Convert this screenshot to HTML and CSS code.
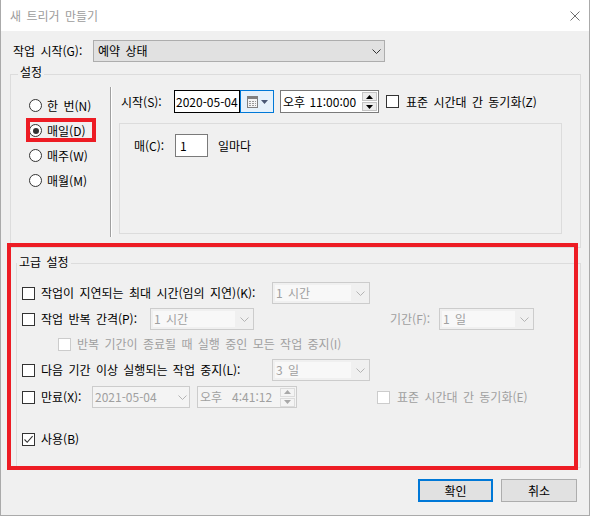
FILE: index.html
```html
<!DOCTYPE html>
<html lang="ko">
<head>
<meta charset="utf-8">
<title>새 트리거 만들기</title>
<link rel="stylesheet" href="styles.css">
</head>
<body>
<div class="window">
  <div class="titlebar">
    <span class="title">새 트리거 만들기</span>
    <svg class="close" width="10" height="10" viewBox="0 0 10 10"><path d="M0.5 0.5 L9.5 9.5 M9.5 0.5 L0.5 9.5" stroke="#707070" stroke-width="1" fill="none"/></svg>
  </div>
  <div class="client">
    <div class="start-row">
      <span class="start-label">작업 시작(G):</span>
      <div class="combo combo-on">
        <span class="val">예약 상태</span>
        <svg class="chev" width="9" height="5" viewBox="0 0 9 5"><path d="M0.5 0.5 L4.5 4.5 L8.5 0.5" stroke="#333" fill="none"/></svg>
      </div>
    </div>

    <fieldset class="fs fs-settings">
      <legend>설정</legend>
      <div class="settings-body">
        <div class="radios">
          <div class="radio-row"><span class="radio"></span><span>한 번(N)</span></div>
          <div class="radio-row"><span class="radio on"></span><span>매일(D)</span></div>
          <div class="radio-row"><span class="radio"></span><span>매주(W)</span></div>
          <div class="radio-row"><span class="radio"></span><span>매월(M)</span></div>
        </div>
        <div class="vsep"></div>
        <div class="sched">
          <div class="sched-row">
            <span class="lbl-start">시작(S):</span>
            <div class="datefield"><span>2020-05-04</span></div>
            <div class="calbtn">
              <svg width="11" height="12" viewBox="0 0 11 12">
                <rect x="0.5" y="0.5" width="10" height="11" fill="#f4f4f4" stroke="#808080"/>
                <rect x="1" y="1" width="9" height="2" fill="#808080"/>
                <path d="M2 5h2v1h-2zM5 5h2v1h-2zM8 5h1v1h-1zM2 7h2v1h-2zM5 7h2v1h-2zM8 7h1v1h-1zM2 9h2v1h-2zM5 9h2v1h-2zM8 9h1v1h-1z" fill="#9a9a9a"/>
              </svg>
              <svg class="caldrop" width="7" height="4" viewBox="0 0 7 4"><path d="M0 0 H7 L3.5 4 Z" fill="#4a5875"/></svg>
            </div>
            <div class="timefield">
              <span class="tval">오후 11:00:00</span>
              <div class="spin">
                <span><svg width="7" height="4" viewBox="0 0 7 4"><path d="M0 4 H7 L3.5 0 Z" fill="#000"/></svg></span>
                <span><svg width="7" height="4" viewBox="0 0 7 4"><path d="M0 0 H7 L3.5 4 Z" fill="#000"/></svg></span>
              </div>
            </div>
            <span class="cb cb-sync"></span>
            <span class="cb-text">표준 시간대 간 동기화(Z)</span>
          </div>
          <div class="panel">
            <div class="panel-row">
              <span class="lbl-every">매(C):</span>
              <div class="numfield">1</div>
              <span class="lbl-days">일마다</span>
            </div>
          </div>
        </div>
      </div>
    </fieldset>

    <fieldset class="fs fs-adv">
      <legend>고급 설정</legend>
      <div class="adv-body">
        <div class="adv-row r1">
          <span class="cb"></span>
          <span class="txt w231">작업이 지연되는 최대 시간(임의 지연)(K):</span>
          <div class="combo combo-off w98">
            <span class="val">1 시간</span>
            <svg class="chev" width="9" height="5" viewBox="0 0 9 5"><path d="M0.5 0.5 L4.5 4.5 L8.5 0.5" stroke="#b4b4b4" fill="none"/></svg>
          </div>
        </div>
        <div class="adv-row r2">
          <span class="cb"></span>
          <span class="txt w109">작업 반복 간격(P):</span>
          <div class="combo combo-off w104">
            <span class="val">1 시간</span>
            <svg class="chev" width="9" height="5" viewBox="0 0 9 5"><path d="M0.5 0.5 L4.5 4.5 L8.5 0.5" stroke="#b4b4b4" fill="none"/></svg>
          </div>
          <span class="dis lbl-period">기간(F):</span>
          <div class="combo combo-off w95">
            <span class="val">1 일</span>
            <svg class="chev" width="9" height="5" viewBox="0 0 9 5"><path d="M0.5 0.5 L4.5 4.5 L8.5 0.5" stroke="#b4b4b4" fill="none"/></svg>
          </div>
        </div>
        <div class="adv-row r3">
          <span class="cb cb-off"></span>
          <span class="txt dis">반복 기간이 종료될 때 실행 중인 모든 작업 중지(I)</span>
        </div>
        <div class="adv-row r4">
          <span class="cb"></span>
          <span class="txt w231">다음 기간 이상 실행되는 작업 중지(L):</span>
          <div class="combo combo-off w98">
            <span class="val">3 일</span>
            <svg class="chev" width="9" height="5" viewBox="0 0 9 5"><path d="M0.5 0.5 L4.5 4.5 L8.5 0.5" stroke="#b4b4b4" fill="none"/></svg>
          </div>
        </div>
        <div class="adv-row r5">
          <span class="cb"></span>
          <span class="txt w51">만료(X):</span>
          <div class="dfield-off">
            <span class="dval">2021-05-04</span>
            <svg class="chev" width="9" height="5" viewBox="0 0 9 5"><path d="M0.5 0.5 L4.5 4.5 L8.5 0.5" stroke="#b4b4b4" fill="none"/></svg>
          </div>
          <div class="tfield-off">
            <span class="ampm">오후</span>
            <span class="tv">4:41:12</span>
            <div class="spin spin-off">
              <span><svg width="7" height="4" viewBox="0 0 7 4"><path d="M0 4 H7 L3.5 0 Z" fill="#a8a8a8"/></svg></span>
              <span><svg width="7" height="4" viewBox="0 0 7 4"><path d="M0 0 H7 L3.5 4 Z" fill="#a8a8a8"/></svg></span>
            </div>
          </div>
          <span class="cb cb-off cb-exp"></span>
          <span class="txt dis">표준 시간대 간 동기화(E)</span>
        </div>
        <div class="adv-row r6">
          <span class="cb"><svg width="11" height="11" viewBox="0 0 11 11"><path d="M1.5 5.5 L4.2 8.3 L9.6 2.2" stroke="#333" stroke-width="1.1" fill="none"/></svg></span>
          <span class="txt">사용(B)</span>
        </div>
      </div>
    </fieldset>

    <div class="buttons">
      <button class="btn btn-default" type="button">확인</button>
      <button class="btn" type="button">취소</button>
    </div>
  </div>
  <div class="mark mark-daily"></div>
  <div class="mark mark-adv"></div>
</div>
</body>
</html>
```
FILE: styles.css
```css
* { box-sizing: border-box; }
html, body { margin: 0; padding: 0; }
body {
  background: #fff;
  width: 593px;
  height: 520px;
  overflow: hidden;
  font-family: "Noto Sans CJK KR", "Noto Sans", sans-serif;
  font-size: 12px;
  line-height: 16px;
  word-spacing: 2px;
  color: #000;
}
.window {
  position: relative;
  width: 590px;
  height: 516px;
  background: #f0f0f0;
  border-left: 1px solid #aaa;
  border-right: 1px solid #aaa;
  border-bottom: 1px solid #aaa;
  display: flex;
  flex-direction: column;
}
.titlebar {
  flex: none;
  height: 31px;
  background: #fff;
  display: flex;
  align-items: center;
  padding-left: 9px;
}
.title { flex: 1; color: #9c9c9c; }
.close { margin-right: 9px; }
.client { flex: 1; display: flex; flex-direction: column; }

/* start row */
.start-row {
  display: flex;
  align-items: center;
  height: 22px;
  margin-top: 9px;
  padding-left: 12px;
}
.start-label { width: 80px; }
.combo {
  display: flex;
  align-items: center;
  height: 22px;
}
.combo .val { flex: 1; }
.combo-on {
  width: 292px;
  background: #e1e1e1;
  border: 1px solid #adadad;
  padding-left: 4px;
}
.combo-on .chev { margin-right: 3px; }
.combo-off {
  border: 1px solid #cccccc;
  background: #f0f0f0;
  color: #a0a0a0;
}
.combo-off .val {
  align-self: stretch;
  margin: 2px 0 2px 2px;
  padding-left: 1px;
  background: #f8f8f8;
  display: flex;
  align-items: center;
}
.combo-off .chev { margin: 0 4px 0 5px; }
.w98 { width: 98px; }
.w104 { width: 104px; }
.w95 { width: 95px; }

/* fieldsets */
.fs {
  margin: 0;
  padding: 0;
  border: 1px solid #dcdcdc;
  min-width: 0;
}
.fs > legend { padding: 0 2px; line-height: 16px; }
.fs-settings { margin: 2px 0 0 9px; width: 571px; }
.fs-settings > legend { margin-left: 7px; padding-bottom: 4px; }
.settings-body { display: flex; height: 163px; }

.radios {
  width: 99px;
  padding: 9px 0 0 18px;
  display: flex;
  flex-direction: column;
}
.radio-row { height: 25px; display: flex; align-items: center; gap: 5px; }
.radio {
  width: 13px;
  height: 13px;
  border: 1px solid #333;
  border-radius: 50%;
  background: #fff;
  display: flex;
  align-items: center;
  justify-content: center;
}
.radio.on::after {
  content: "";
  width: 6px;
  height: 6px;
  border-radius: 50%;
  background: #333;
}
.vsep {
  width: 2px;
  height: 150px;
  margin-top: 3px;
  border-left: 1px solid #a0a0a0;
  border-right: 1px solid #fff;
}
.sched { display: flex; flex-direction: column; padding: 6px 0 0 9px; }
.sched-row { display: flex; align-items: center; height: 23px; }
.lbl-start { width: 53px; }
.datefield {
  width: 66px;
  height: 23px;
  border: 1px solid #000;
  background: #fff;
  padding-left: 1px;
  display: flex;
  align-items: center;
}
.calbtn {
  width: 34px;
  height: 23px;
  border: 1px solid #0078d7;
  background: #e5f1fb;
  display: flex;
  align-items: center;
  padding-left: 6px;
  gap: 3px;
}
.timefield {
  margin-left: 6px;
  width: 99px;
  height: 23px;
  border: 1px solid #7a7a7a;
  background: #fff;
  display: flex;
  align-items: center;
  padding-left: 2px;
}
.tval { flex: 1; word-spacing: 1px; }
.spin { display: flex; flex-direction: column; gap: 1px; margin-right: 1px; }
.spin span {
  width: 15px;
  height: 9px;
  background: #ececec;
  border: 1px solid #c4c4c4;
  display: flex;
  align-items: center;
  justify-content: center;
}
.spin-off span { background: #f4f4f4; border-color: #dcdcdc; }

.cb {
  width: 13px;
  height: 13px;
  flex: none;
  border: 1px solid #333;
  background: #fff;
  display: flex;
  align-items: center;
  justify-content: center;
}
.cb-off { border-color: #cccccc; }
.cb-sync { margin-left: 7px; }
.cb-text { margin-left: 7px; }

.panel {
  margin: 10px 0 0 -2px;
  width: 443px;
  height: 111px;
  border: 1px solid #dcdcdc;
  padding: 10px 0 0 14px;
}
.panel-row { display: flex; align-items: center; height: 23px; }
.lbl-every { width: 41px; }
.numfield {
  width: 33px;
  height: 23px;
  border: 1px solid #7a7a7a;
  background: #fff;
  padding-left: 4px;
  display: flex;
  align-items: center;
}
.lbl-days { margin-left: 10px; }

/* advanced */
.fs-adv { margin: 6px 0 0 15px; width: 565px; }
.fs-adv > legend { margin-left: 0; padding-bottom: 2px; }
.adv-body { height: 195px; padding-left: 5px; display: flex; flex-direction: column; }
.adv-row { display: flex; align-items: center; }
.adv-row .txt { margin-left: 6px; }
.dis { color: #a0a0a0; }
.w231 { width: 231px; }
.w109 { width: 109px; }
.w51 { width: 51px; }
.r1 { margin-top: 10px; height: 22px; }
.r2 { margin-top: 4px; height: 22px; }
.r3 { margin-top: 4px; height: 20px; padding-left: 36px; }
.r4 { margin-top: 5px; height: 22px; }
.r5 { margin-top: 5px; height: 22px; }
.r6 { margin-top: 21px; height: 20px; }
.lbl-period { margin-left: 136px; width: 49px; }

.dfield-off {
  width: 98px;
  height: 22px;
  border: 1px solid #cccccc;
  background: #f4f4f4;
  color: #a0a0a0;
  display: flex;
  align-items: center;
  padding-left: 2px;
}
.dfield-off .dval { flex: 1; }
.dfield-off .chev { margin-right: 2px; }
.tfield-off {
  margin-left: 7px;
  width: 100px;
  height: 22px;
  border: 1px solid #cccccc;
  background: #f4f4f4;
  color: #a0a0a0;
  display: flex;
  align-items: center;
  padding-left: 2px;
}
.tfield-off .tv { flex: 1; margin-left: 10px; }
.cb-exp { margin-left: 80px; }
.cb-exp + .txt { margin-left: 7px; }

/* buttons */
.buttons {
  display: flex;
  justify-content: flex-end;
  gap: 8px;
  padding-right: 12px;
  margin-top: 11px;
}
.btn {
  width: 76px;
  height: 23px;
  margin: 0;
  padding: 0;
  font: inherit;
  word-spacing: inherit;
  color: #000;
  background: #e1e1e1;
  border: 1px solid #adadad;
}
.btn-default { width: 75px; border: 2px solid #0078d7; }

/* annotation marks */
.mark {
  position: absolute;
  border: 4px solid #ed1c24;
  pointer-events: none;
}
.mark-daily { left: 25px; top: 118px; width: 70px; height: 24px; }
.mark-adv { left: 6px; top: 243px; width: 571px; height: 227px; }
```
